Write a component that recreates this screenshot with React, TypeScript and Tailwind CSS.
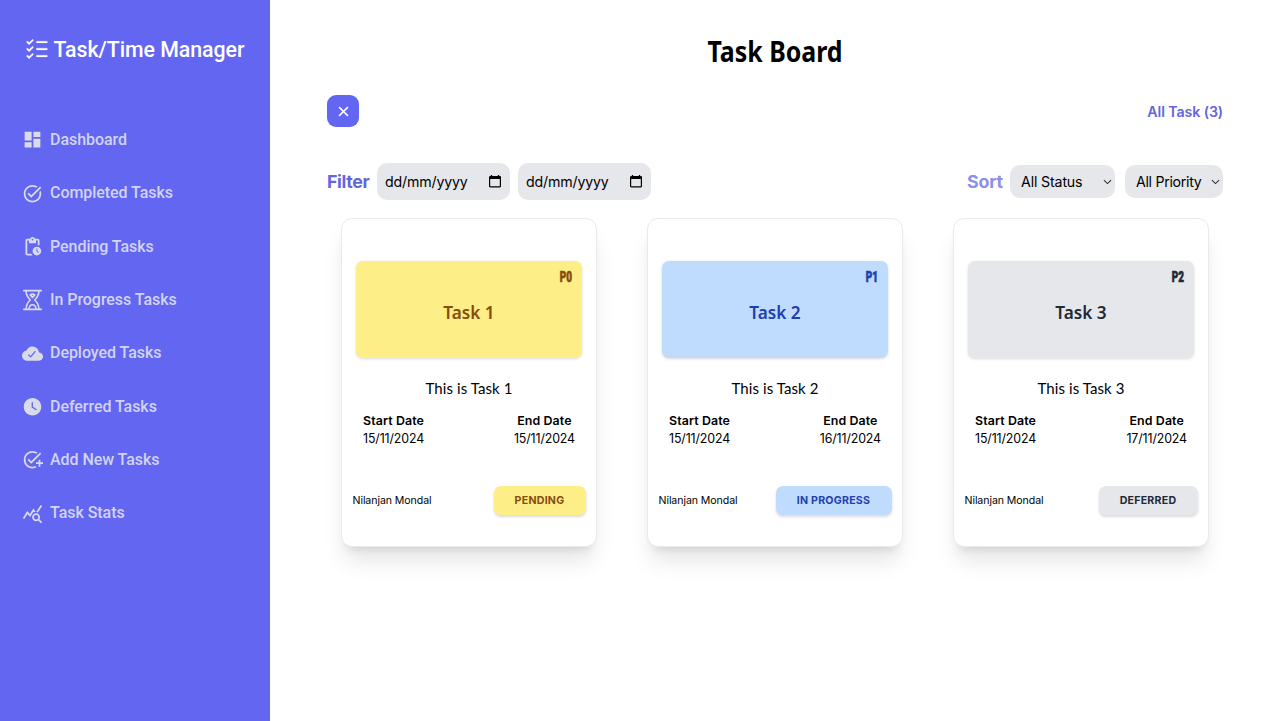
import type { ReactNode } from "react";
import { MdDashboard, MdTaskAlt, MdOutlinePendingActions, MdWatchLater, MdAddTask, MdQueryStats } from "react-icons/md";
import { IoCloudDone } from "react-icons/io5";
import { PiListChecks } from "react-icons/pi";
import { RxCross2 } from "react-icons/rx";

function HourglassIcon() {
  return (
    <svg width="21" height="22" viewBox="0 0 22 22" fill="none" stroke="currentColor" strokeWidth="1.700" strokeLinecap="round" strokeLinejoin="round">
      <path d="M1.800 1.200h18.400M1.800 20.800h18.400" />
      <path d="M4.300 1.400c0 4.600 1.200 6.800 4.400 9.600-3.200 2.800-4.400 5-4.400 9.600M17.700 1.400c0 4.600-1.200 6.800-4.400 9.600 3.200 2.800 4.400 5 4.400 9.600" />
      <path d="M8.600 5.600c.9-.7 1.600-.7 2.400-.7s1.500 0 2.400.7L11 8.200zM7.400 20c.2-2.700 1.700-4 3.600-4s3.400 1.300 3.600 4" />
    </svg>
  );
}

function CalendarIcon() {
  return (
    <svg width="12" height="13" viewBox="0 0 12 13" className="shrink-0" fill="none">
      <path d="M2.500 0v2M9.500 0v2" stroke="black" strokeWidth="1.300" />
      <rect x=".6" y="1.600" width="10.800" height="10.300" rx=".7" stroke="black" strokeWidth="1.200" />
      <path d="M.6 1.600h10.800v2.400H.6z" fill="black" />
    </svg>
  );
}

function Chevron() {
  return (
    <svg width="9" height="6" viewBox="0 0 9 6" className="shrink-0" fill="none">
      <path d="M.9 1.200 4.500 4.600l3.600-3.400" stroke="#333" strokeWidth="1.100" />
    </svg>
  );
}

const nav: { label: string; icon: ReactNode }[] = [
  { label: "Dashboard", icon: <MdDashboard size={21.3} /> },
  { label: "Completed Tasks", icon: <MdTaskAlt size={21.3} /> },
  { label: "Pending Tasks", icon: <MdOutlinePendingActions size={21.3} /> },
  { label: "In Progress Tasks", icon: <HourglassIcon /> },
  { label: "Deployed Tasks", icon: <IoCloudDone size={21.3} /> },
  { label: "Deferred Tasks", icon: <MdWatchLater size={21.3} /> },
  { label: "Add New Tasks", icon: <MdAddTask size={21.3} /> },
  { label: "Task Stats", icon: <MdQueryStats size={21.3} /> },
];

const tasks = [
  { n: 1, end: "15/11/2024", status: "PENDING", tone: "bg-[#fdee87] text-[#854d0e]", pill: "w-[92px]" },
  { n: 2, end: "16/11/2024", status: "IN PROGRESS", tone: "bg-[#bfdbfe] text-[#1e40af]", pill: "w-[116px]" },
  { n: 3, end: "17/11/2024", status: "DEFERRED", tone: "bg-[#e5e7eb] text-[#1f2937]", pill: "w-[99px]" },
];

function DateField() {
  return (
    <div className="flex h-[37px] w-[133px] items-center justify-between rounded-[10px] bg-gray-200 pr-[9.500px] pl-[8px] text-[14.200px] tracking-[-0.180px]">
      <span>dd/mm/yyyy</span>
      <CalendarIcon />
    </div>
  );
}

function TaskCard({ task }: { task: (typeof tasks)[number] }) {
  return (
    <article className="flex h-[329px] w-[256px] flex-col rounded-[11px] border border-[#e9eaed] bg-white pt-[42px] shadow-[0_18px_22px_-4px_rgba(0,0,0,0.1),0_7px_9px_-5px_rgba(0,0,0,0.1)]">
      <div className={`mx-[14px] flex h-[97px] flex-col rounded-[7px] shadow-[0_1px_3px_rgba(0,0,0,0.15)] ${task.tone}`}>
        <div className="flex h-[32px] items-center justify-end pt-[2px] pr-[10px]">
          <span className="origin-right scale-x-[0.640] font-['Roboto'] text-[15.500px] leading-none font-black [-webkit-text-stroke:0.700px_currentColor]">P{task.n - 1}</span>
        </div>
        <h2 className="scale-x-[0.930] text-center font-['Noto_Sans'] text-[18.500px] leading-[38px] font-semibold">Task {task.n}</h2>
      </div>
      <p className="mt-[19px] text-center font-['Lato'] text-[15px] leading-[22px] tracking-[0.100px]">This is Task {task.n}</p>
      <div className="mt-[13px] flex justify-between px-[21px] text-center text-[12.400px] leading-[18px]">
        <div>
          <h3 className="font-semibold tracking-[0.100px]">Start Date</h3>
          <p className="tracking-[-0.120px]">15/11/2024</p>
        </div>
        <div>
          <h3 className="font-semibold tracking-[0.100px]">End Date</h3>
          <p className="tracking-[-0.120px]">{task.end}</p>
        </div>
      </div>
      <div className="mt-[38px] flex items-center justify-between pr-[10.500px] pl-[10.500px]">
        <span className="text-[10.600px] tracking-[-0.080px]">Nilanjan Mondal</span>
        <span className={`flex h-[29px] items-center justify-center rounded-[7px] text-[10.600px] font-bold tracking-[0.250px] shadow-[0_2px_3px_rgba(0,0,0,0.15)] ${task.tone} ${task.pill}`}>{task.status}</span>
      </div>
    </article>
  );
}

export default function App() {
  return (
    <div className="flex h-[721px] w-[1280px] overflow-hidden bg-white font-['Inter',sans-serif] text-black">
      <aside className="w-[270px] shrink-0 bg-[#6366f1] font-['Roboto',sans-serif]">
        <div className="flex h-[98px] items-center gap-[3px] pl-[22.500px] text-white">
          <PiListChecks size={28} stroke="currentColor" strokeWidth={2} />
          <h1 className="pt-[1px] text-[21.300px] font-medium tracking-[-0.040px] whitespace-nowrap">Task/Time Manager</h1>
        </div>
        <nav className="mt-[15px] flex flex-col text-[#d1d4f2]">
          {nav.map((item) => (
            <a key={item.label} className="flex h-[53.350px] items-center gap-[7.500px] pt-[0.400px] pl-[21.500px] text-[16px] font-medium tracking-[-0.050px]">
              <span className="flex w-[21px] justify-center text-[#d9dbea]">{item.icon}</span>
              {item.label}
            </a>
          ))}
        </nav>
      </aside>
      <main className="flex w-[1010px] flex-col pt-[31px] pr-[57px] pl-[57px]">
        <h1 className="scale-x-[0.890] text-center font-['Noto_Sans'] text-[28px] leading-[40px] font-bold">Task Board</h1>
        <div className="mt-[24px] flex h-[32px] items-center justify-between">
          <button className="flex h-[32px] w-[32px] items-center justify-center rounded-[9px] bg-[#6366f1] text-white">
            <RxCross2 size={15} strokeWidth={0.7} stroke="white" />
          </button>
          <span className="pt-[2px] text-[14.200px] font-semibold tracking-[-0.100px] text-[#6366dc]">All Task (3)</span>
        </div>
        <div className="mt-[36px] flex h-[37px] items-center justify-between">
          <div className="flex items-center">
            <span className="w-[50px] pt-[2px] text-[17.800px] font-bold tracking-[-0.350px] text-[#6366dc]">Filter</span>
            <div className="flex gap-[8px]">
              <DateField />
              <DateField />
            </div>
          </div>
          <div className="flex items-center">
            <span className="w-[43px] pt-[2px] text-[17.800px] font-bold tracking-[-0.200px] text-[#8b8fe8]">Sort</span>
            <div className="flex h-[33px] w-[105px] items-center justify-between rounded-[10px] bg-gray-200 pr-[3px] pl-[11px] text-[14.200px] tracking-[-0.150px]">
              <span>All Status</span>
              <Chevron />
            </div>
            <div className="ml-[10px] flex h-[33px] w-[98px] items-center justify-between rounded-[10px] bg-gray-200 pr-[3px] pl-[11px] text-[14.200px] tracking-[-0.300px]">
              <span className="whitespace-nowrap">All Priority</span>
              <Chevron />
            </div>
          </div>
        </div>
        <section className="mt-[18px] flex gap-[50px] pl-[14px]">
          {tasks.map((task) => (
            <TaskCard key={task.n} task={task} />
          ))}
        </section>
      </main>
    </div>
  );
}
